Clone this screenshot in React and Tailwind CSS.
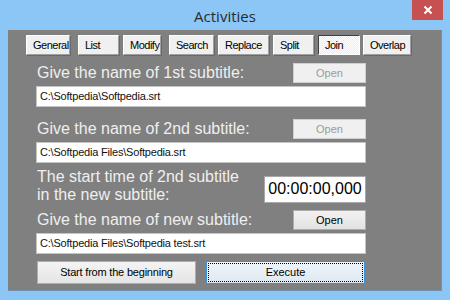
const tabs = [
  { label: 'General', cls: 'w-[44px]' },
  { label: 'List', cls: 'w-[41px] ml-[8px]' },
  { label: 'Modify', cls: 'w-[38px] ml-[4px]' },
  { label: 'Search', cls: 'w-[45px] ml-[8px]' },
  { label: 'Replace', cls: 'w-[51px] ml-[4px]' },
  { label: 'Split', cls: 'w-[41px] ml-[4px]' },
  { label: 'Join', cls: 'w-[42px] ml-[4px]', active: true },
  { label: 'Overlap', cls: 'w-[48px] ml-[3px]' },
]

function Tab({ label, cls, active }) {
  return (
    <div
      className={`h-[20px] flex items-center pl-[6px] text-[11px] tracking-[-0.5px] whitespace-nowrap overflow-hidden text-black ${cls} ${
        active
          ? 'border border-t-[#404040] border-l-[#404040] border-b-white border-r-white bg-[repeating-conic-gradient(#ffffff_0_25%,#ececec_0_50%)] bg-[length:2px_2px]'
          : 'bg-[#f0f0f0] border border-t-white border-l-white border-b-[#a0a0a0] border-r-[#a0a0a0] shadow-[1px_1px_0_#696969]'
      }`}
    >
      {label}
    </div>
  )
}

function Label({ children, className = '' }) {
  return <div className={`text-[16px] leading-[18px] text-[#efefef] ${className}`}>{children}</div>
}

function Field({ value, className = '' }) {
  return (
    <div className={`h-[21px] w-[330px] bg-white border border-[#c4c4c4] flex items-center pl-[3px] text-[11px] tracking-[-0.2px] text-[#111] ${className}`}>
      {value}
    </div>
  )
}

function OpenBtn({ disabled }) {
  return (
    <div
      className={`w-[73px] h-[20px] flex items-center justify-center text-[11px] bg-[#f0f0f0] border ${
        disabled
          ? 'border-[#cfcfcf] text-[#9a9a9a]'
          : 'border-[#adadad] text-black bg-gradient-to-b from-[#f2f2f2] to-[#e2e2e2]'
      }`}
    >
      Open
    </div>
  )
}

export default function App() {
  return (
    <div className="w-[450px] h-[300px] bg-[#8cc6f7] flex flex-col font-['Liberation_Sans',Arial,sans-serif] overflow-hidden">
      {/* Title bar */}
      <div className="h-[30px] flex relative">
        <div className="flex-1 text-center pt-[5px] text-[15px] text-[#2b2b2b] font-['Open_Sans',sans-serif]">
          Activities
        </div>
        <div className="absolute right-[7px] top-0 w-[31px] h-[20px] bg-[#c75050] flex items-center justify-center">
          <svg width="10" height="10" viewBox="0 0 10 10">
            <path d="M1.5 1.5 L8.5 8.5 M8.5 1.5 L1.5 8.5" stroke="white" strokeWidth="2" />
          </svg>
        </div>
      </div>

      {/* Client area */}
      <div className="mx-[8px] h-[261px] bg-[#808080] border-b border-r border-[#6f8fae] flex flex-col">
        <div className="flex mt-[5px] pl-[18px]">
          {tabs.map((t) => (
            <Tab key={t.label} {...t} />
          ))}
        </div>

        <div className="pl-[28px] flex flex-col">
          <div className="flex items-center justify-between w-[330px] mt-[8px] h-[20px]">
            <Label className="pl-[1px]">Give the name of 1st subtitle:</Label>
            <OpenBtn disabled />
          </div>
          <Field value="C:\Softpedia\Softpedia.srt" className="mt-[3px]" />

          <div className="flex items-center justify-between w-[330px] mt-[12px] h-[20px]">
            <Label className="pl-[1px]">Give the name of 2nd subtitle:</Label>
            <OpenBtn disabled />
          </div>
          <Field value="C:\Softpedia Files\Softpedia.srt" className="mt-[3px]" />

          <div className="flex items-center justify-between w-[330px] mt-[5px]">
            <Label className="pl-[1px]">
              The start time of 2nd subtitle
              <br />
              in the new subtitle:
            </Label>
            <div className="w-[102px] h-[27px] bg-white border border-[#a8a8a8] flex items-center justify-center text-[16px] text-black mt-[6px]">
              00:00:00,000
            </div>
          </div>

          <div className="flex items-center justify-between w-[330px] mt-[6px] h-[20px]">
            <Label className="pl-[1px]">Give the name of new subtitle:</Label>
            <OpenBtn />
          </div>
          <Field value="C:\Softpedia Files\Softpedia test.srt" className="mt-[3px]" />

          <div className="flex mt-[7px] w-[330px]">
            <div className="ml-[1px] w-[159px] h-[23px] bg-gradient-to-b from-[#f4f4f4] to-[#e4e4e4] border border-[#adadad] flex items-center justify-center text-[11px] tracking-[-0.2px] text-black">
              Start from the beginning
            </div>
            <div className="ml-[10px] w-[159px] h-[23px] bg-gradient-to-b from-[#eef5fb] to-[#dfe8f0] border border-[#3c8fd9] p-[1px]">
              <div className="w-full h-full border border-dotted border-black flex items-center justify-center text-[11px] text-black">
                Execute
              </div>
            </div>
          </div>
        </div>
      </div>
    </div>
  )
}
